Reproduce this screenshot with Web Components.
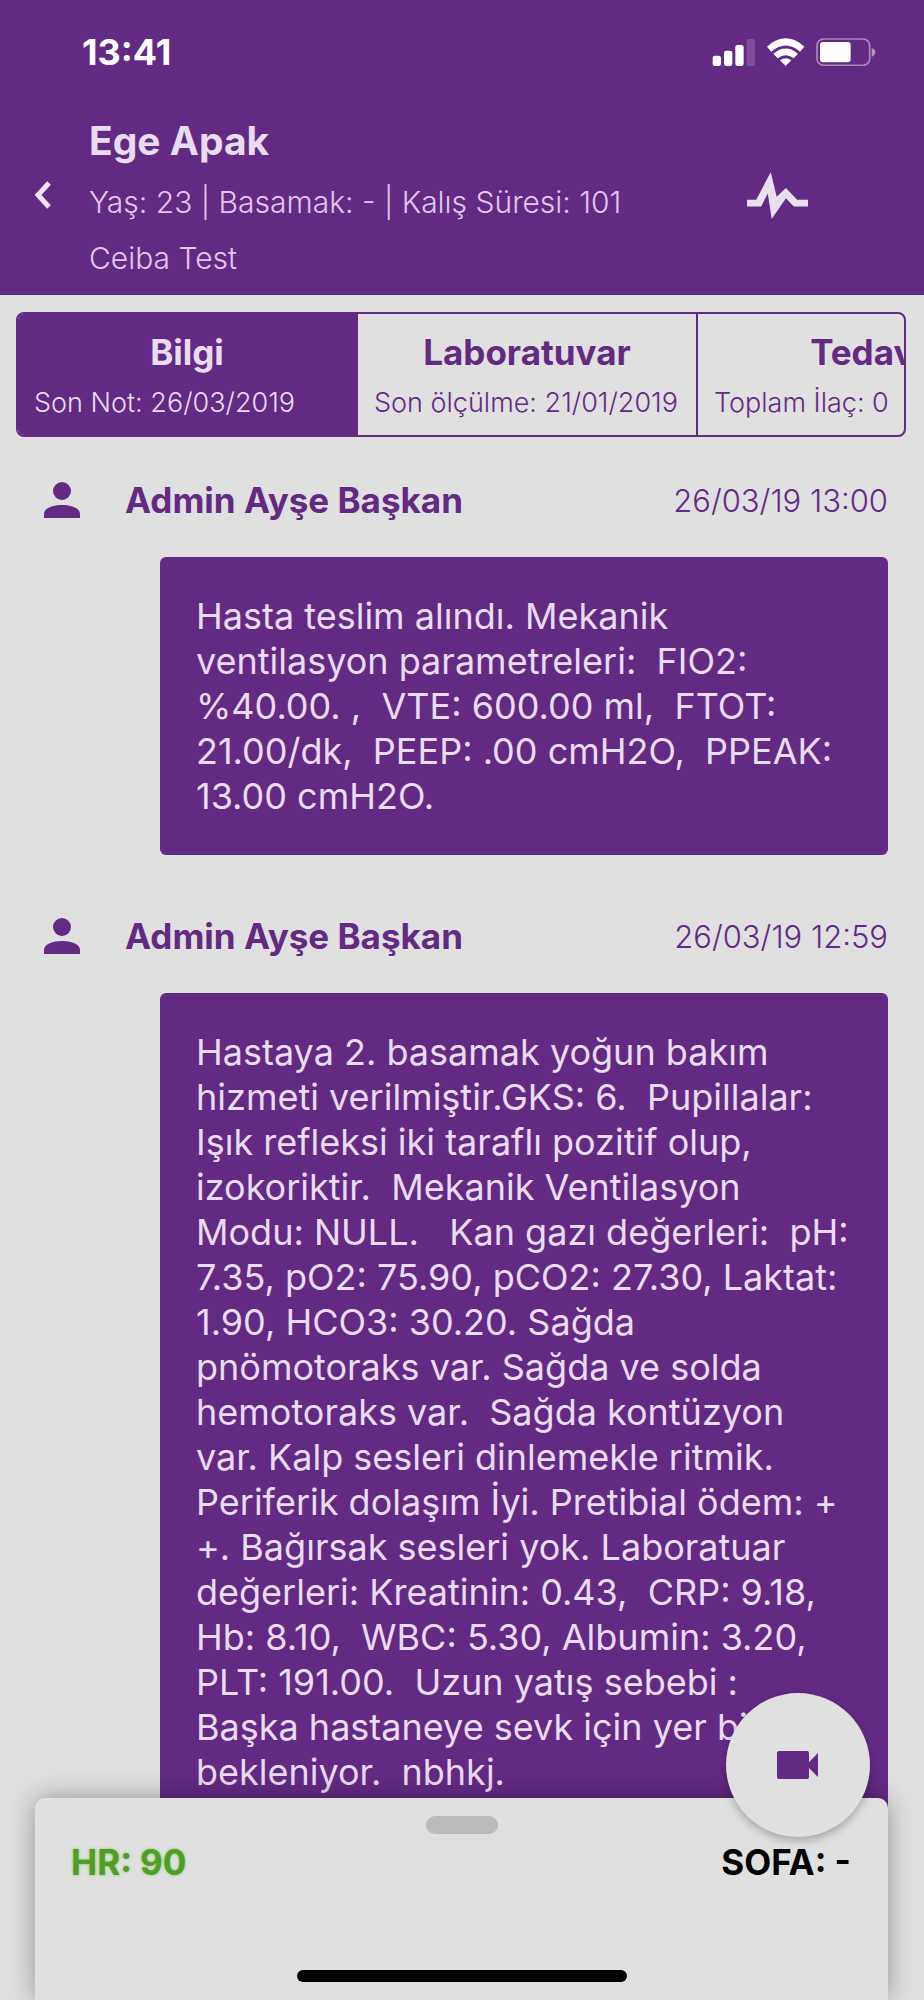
<!DOCTYPE html>
<html lang="tr">
<head>
<meta charset="utf-8">
<meta name="viewport" content="width=device-width, initial-scale=1">
<title>Ege Apak</title>
<style>
  body { margin: 0; font-family: Inter, "Noto Sans", sans-serif; background: #e0e0e0; }
</style>
</head>
<body>
<patient-app>
  <status-bar slot="top" time="13:41"></status-bar>
  <patient-header slot="top" name="Ege Apak">
    <span slot="facts">Yaş: 23 | Basamak: - | Kalış Süresi: 101</span>
    <span slot="unit">Ceiba Test</span>
  </patient-header>
  <tab-strip slot="tabs">
    <tab-item selected label="Bilgi">Son Not: 26/03/2019</tab-item>
    <tab-item label="Laboratuvar">Son ölçülme: 21/01/2019</tab-item>
    <tab-item label="Tedavi">Toplam İlaç: 0</tab-item>
  </tab-strip>
  <note-entry author="Admin Ayşe Başkan" date="26/03/19 13:00">Hasta teslim alındı. Mekanik
ventilasyon parametreleri:  FIO2:
%40.00. ,  VTE: 600.00 ml,  FTOT:
21.00/dk,  PEEP: .00 cmH2O,  PPEAK:
13.00 cmH2O.</note-entry>
  <note-entry author="Admin Ayşe Başkan" date="26/03/19 12:59">Hastaya 2. basamak yoğun bakım
hizmeti verilmiştir.GKS: 6.  Pupillalar:
Işık refleksi iki taraflı pozitif olup,
izokoriktir.  Mekanik Ventilasyon
Modu: NULL.   Kan gazı değerleri:  pH:
7.35, pO2: 75.90, pCO2: 27.30, Laktat:
1.90, HCO3: 30.20. Sağda
pnömotoraks var. Sağda ve solda
hemotoraks var.  Sağda kontüzyon
var. Kalp sesleri dinlemekle ritmik.
Periferik dolaşım İyi. Pretibial ödem: +
+. Bağırsak sesleri yok. Laboratuar
değerleri: Kreatinin: 0.43,  CRP: 9.18,
Hb: 8.10,  WBC: 5.30, Albumin: 3.20,
PLT: 191.00.  Uzun yatış sebebi :
Başka hastaneye sevk için yer bi
bekleniyor.  nbhkj.</note-entry>
  <vitals-sheet slot="sheet">
    <span slot="hr">HR: 90</span>
    <span slot="sofa">SOFA: -</span>
  </vitals-sheet>
</patient-app>

<script>
const define = (name, markup, setup) => {
  const template = document.createElement('template');
  template.innerHTML = markup;
  customElements.define(name, class extends HTMLElement {
    constructor() {
      super();
      this.attachShadow({ mode: 'open' }).append(template.content.cloneNode(true));
    }
    connectedCallback() {
      if (setup) setup(this, selector => this.shadowRoot.querySelector(selector));
    }
  });
};

define('patient-app', `
  <style>
    :host {
      --purple: #632a84; --surface: #e0e0e0; --on-purple: #e8dcf0;
      display: flex; flex-direction: column; position: relative;
      height: 100vh; overflow: hidden; background: var(--surface);
    }
    header { background: var(--purple); padding-bottom: 9px; }
    nav { padding: 17px 18px 0 16px; }
    main { flex: 1; min-height: 0; overflow: hidden; padding: 0 36px 0 44px; }
    footer { position: absolute; left: 35px; right: 36px; bottom: 0; }
  </style>
  <header><slot name="top"></slot></header>
  <nav><slot name="tabs"></slot></nav>
  <main><slot></slot></main>
  <footer><slot name="sheet"></slot></footer>
`);

define('status-bar', `
  <style>
    :host {
      display: flex; justify-content: space-between; align-items: center;
      height: 104px; padding: 0 48px 0 82px; color: #fff;
      font-size: 36px; font-weight: 700;
    }
    svg { display: block; }
  </style>
  <time></time>
  <svg width="164" height="28" viewBox="66 49 492 84" fill="#fff" aria-hidden="true">
    <rect x="68" y="102" width="25" height="31" rx="7"/>
    <rect x="102" y="87" width="25" height="46" rx="7"/>
    <rect x="136" y="70" width="25" height="63" rx="7"/>
    <rect x="170" y="52" width="25" height="81" rx="7" opacity=".18"/>
    <path d="M231 75Q287 25 343 75L330 90Q287 53 244 90Z"/>
    <path d="M250 96Q287 65 324 96L311 110Q287 91 263 110Z"/>
    <path d="M270 116Q287 103 304 116L287 133Z"/>
    <rect x="381" y="52" width="158" height="79" rx="20" fill="none" stroke="#fff" stroke-opacity=".45" stroke-width="5"/>
    <rect x="390" y="61" width="92" height="61" rx="9"/>
    <path d="M545 79Q556 82 556 92T545 105Z" opacity=".5"/>
  </svg>
`, (host, $) => { $('time').textContent = host.getAttribute('time'); });

define('patient-header', `
  <style>
    :host { display: grid; grid-template-columns: 89px 1fr 60px; align-items: center; padding-right: 117px; }
    button { border: 0; background: none; padding: 0; display: block; }
    .back { padding-left: 34px; }
    svg { display: block; }
    h1 { margin: 0; font-size: 39px; line-height: 60px; font-weight: 700; color: var(--on-purple); padding: 7px 0 3px; }
    p { margin: 0; font-size: 30px; font-weight: 300; line-height: 56px; color: #e0c8ee; white-space: nowrap; }
  </style>
  <button class="back" type="button" aria-label="Geri">
    <svg width="18" height="30" viewBox="0 0 18 30"><path d="M15 3L4 15L15 27" fill="none" stroke="#f0e4f6" stroke-width="5"/></svg>
  </button>
  <div><h1></h1><p><slot name="facts"></slot></p><p><slot name="unit"></slot></p></div>
  <button type="button" aria-label="Vital bulgular">
    <svg width="61" height="47" viewBox="170 455 185 142" fill="#e8e0ee"><path d="M170 539H198L242 455L260 530L288 503L322 539H355V559H312L288 534L245 597L233 520L213 559H170Z"/></svg>
  </button>
`, (host, $) => { $('h1').textContent = host.getAttribute('name'); });

define('tab-strip', `
  <style>
    :host { display: flex; overflow: hidden; box-sizing: border-box; height: 125px;
      border: 2px solid var(--purple); border-radius: 8px; }
  </style>
  <slot></slot>
`);

define('tab-item', `
  <style>
    :host { flex: 0 0 340px; display: flex; box-sizing: border-box; border-right: 2px solid var(--purple); }
    button { flex: 1; border: 0; margin: 0; padding: 12px 16px 0; background: none; font: inherit;
      color: var(--purple); display: flex; flex-direction: column; text-align: left; }
    strong { align-self: center; font-size: 35px; line-height: 52px; font-weight: 700; }
    small { font-size: 27px; line-height: 50px; font-weight: 300; white-space: nowrap; }
    :host([selected]) button { background: var(--purple); color: var(--on-purple); }
  </style>
  <button type="button"><strong></strong><small><slot></slot></small></button>
`, (host, $) => { $('strong').textContent = host.getAttribute('label'); });

define('note-entry', `
  <style>
    :host { display: block; color: var(--purple); padding-top: 41px; }
    :host(:not(:first-of-type)) { padding-top: 59px; }
    .head { display: flex; align-items: center; height: 44px; margin-bottom: 35px; }
    svg { display: block; margin-right: 45px; }
    h2 { margin: 0; flex: 1; font-size: 35px; line-height: 44px; font-weight: 700; }
    time { font-size: 31px; font-weight: 300; }
    .bubble { margin: 0 0 0 116px; padding: 37px 0 36px 36px; border-radius: 6px; background: var(--purple);
      color: var(--on-purple); font-size: 36px; line-height: 45px; white-space: pre; }
  </style>
  <article>
    <div class="head">
      <svg width="36" height="36" viewBox="0 0 36 36" fill="#632a84" aria-hidden="true"><circle cx="18" cy="9" r="9"/><path d="M0 36V32C0 20 36 20 36 32V36Z"/></svg>
      <h2></h2><time></time>
    </div>
    <p class="bubble"><slot></slot></p>
  </article>
`, (host, $) => {
  $('h2').textContent = host.getAttribute('author');
  $('time').textContent = host.getAttribute('date');
});

define('vitals-sheet', `
  <style>
    :host { display: block; position: relative; box-sizing: border-box; height: 202px; padding-top: 18px;
      border-radius: 10px 10px 0 0; background: var(--surface); box-shadow: 0 0 26px rgba(0, 0, 0, .35); }
    .handle { width: 72px; height: 18px; margin: 0 auto; border-radius: 9px; background: #bbb; }
    .values { display: flex; justify-content: space-between; padding: 6px 37px 0 36px;
      font-size: 35px; line-height: 44px; font-weight: 700; color: #000; }
    .hr { color: #4f9e26; text-shadow: 0 0 3px #7cc04f; }
    .home { width: 330px; height: 12px; margin: 86px auto 0; border-radius: 6px; background: #000; }
    button { position: absolute; right: 18px; top: -105px; width: 144px; height: 144px; border: 0; border-radius: 50%;
      padding: 0; background: var(--surface); box-shadow: 0 4px 8px rgba(0, 0, 0, .25);
      display: flex; align-items: center; justify-content: center; }
  </style>
  <div class="handle"></div>
  <div class="values"><span class="hr"><slot name="hr"></slot></span><slot name="sofa"></slot></div>
  <div class="home"></div>
  <button type="button" aria-label="Görüntülü görüşme">
    <svg width="42" height="28" viewBox="0 0 42 28" fill="#632a84"><path d="M2 0H30Q32 0 32 2V11L41 2V26L32 17V26Q32 28 30 28H2Q0 28 0 26V2Q0 0 2 0Z"/></svg>
  </button>
`);
</script>
</body>
</html>
